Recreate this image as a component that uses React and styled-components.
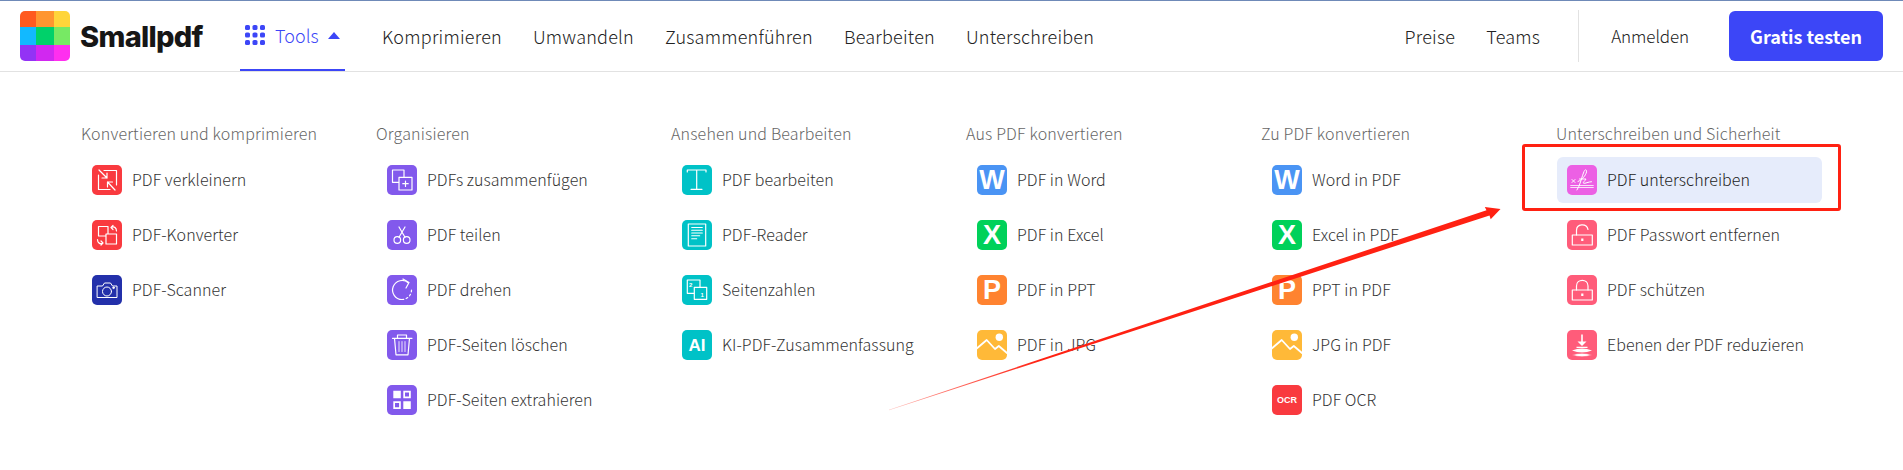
import React from "react";
import styled, { createGlobalStyle } from "styled-components";

const Global = createGlobalStyle`
  html, body { margin: 0; padding: 0; background: #fff; }
  body { font-family: "Noto Sans CJK SC", "Source Sans Pro", "Lato", sans-serif; overflow: hidden; }
`;

const Page = styled.div`position: relative; width: 1903px; height: 470px; background: #fff; overflow: hidden;`;
const Header = styled.header`
  display: flex; align-items: stretch; height: 70px; box-sizing: content-box;
  border-top: 1px solid #6f8ab8; border-bottom: 1px solid #e2e2e2; padding: 0 20px;
`;
const Brand = styled.div`display: flex; align-items: center; gap: 10px; width: 220px;`;
const LogoGrid = styled.div`
  display: grid; grid-template-columns: 16px 18px 16px; grid-template-rows: 16px 18px 16px;
  width: 50px; height: 50px; border-radius: 5px; overflow: hidden;
`;
const LogoCell = styled.span`background: ${p => p.$c};`;
const BrandName = styled.span`
  font-family: Inter, sans-serif; font-weight: 800; font-size: 29px; letter-spacing: -0.7px; color: #161616; line-height: 1;
`;
const ToolsTab = styled.div`
  display: flex; align-items: center; width: 105px; height: 70px; box-sizing: border-box; padding-left: 5px;
  border-bottom: 2px solid #3c46f7; color: #3c46f7; font-size: 18px; font-weight: 300; margin-right: 37px;
`;
const ToolsLabel = styled.span`margin: 0 9px 0 10px; line-height: 24px;`;
const NavList = styled.nav`display: flex; align-items: center; gap: 31px;`;
const NavLink = styled.a`font-size: 18px; font-weight: 300; letter-spacing: 0.22px; line-height: 24px; color: #222;`;
const RightArea = styled.div`margin-left: auto; display: flex; align-items: center;`;
const Divider = styled.div`width: 1px; height: 52px; background: #e2e2e2; margin: 0 32px 0 38px;`;
const LoginLink = styled.a`font-size: 17px; font-weight: 300; letter-spacing: -0.1px; line-height: 24px; color: #222; margin-right: 40px;`;
const CtaButton = styled.button`
  width: 154px; height: 50px; border: 0; border-radius: 6px; background: #3c46f7; color: #fff; padding: 0;
  font: 700 18px/24px "Noto Sans CJK SC", sans-serif;
`;
const Menu = styled.main`display: flex; gap: 30px; padding: 49px 0 0 82px;`;
const Column = styled.section`width: 265px; display: flex; flex-direction: column; gap: 9px;`;
const ColTitle = styled.h3`
  margin: 0 0 3px -1px; font-size: 16px; font-weight: 300; letter-spacing: 0.17px; line-height: 24px; color: #666;
`;
const Row = styled.a`
  position: relative; display: flex; align-items: center; gap: 10px; height: 46px; padding-left: 10px;
  border-radius: 6px; background: ${p => (p.$active ? "#e6ecfb" : "transparent")};
  font-size: 16px; font-weight: 300; letter-spacing: 0.06px; color: ${p => (p.$active ? "#222" : "#333")};
`;
const RowLabel = styled.span`padding-bottom: 3px; line-height: 24px;`;
const Tile = styled.span`
  display: flex; align-items: center; justify-content: center; flex: none; width: 30px; height: 30px;
  border-radius: 5px; overflow: hidden; background: ${p => p.$c}; color: #fff; letter-spacing: 0;
  font-family: "Liberation Sans", Arial, sans-serif; font-weight: 700; font-size: ${p => p.$size || 26}px; line-height: 1;
`;
const RedBox = styled.span`
  position: absolute; left: -35px; top: -13px; right: -19px; bottom: -8px;
  border: 3px solid #ff2112; border-radius: 3px; pointer-events: none;
`;
const ArrowLayer = styled.svg`position: absolute; inset: 0; pointer-events: none;`;

const S = ({ children, w = 1.2, fill = "none" }) => (
  <svg width="30" height="30" viewBox="0 0 30 30" fill={fill} stroke="#fff" strokeWidth={w} strokeLinecap="round" strokeLinejoin="round">{children}</svg>
);
const RED = "#f93a3f", NAVY = "#2330aa", PUR = "#8259ec", TEAL = "#00c2c7", BLUE = "#4a94f4", GRN = "#00d15a", ORG = "#ff8330", YEL = "#ffb938", PINK = "#ff5c7a", MAG = "#ec60e4";

const icons = {
  compress: <S><path d="M12 5.5h12.5V20M18 24.5H6.5V10" /><path d="M7 5l8 8M15 8v5h-5M23 25l-7.5-8M15.5 22v-5h5" /></S>,
  convert: <S><path d="M6.5 6.5h9.5v9.5H6.5z" /><path d="M14 14h10.5v10H14z" fill={RED} /><path d="M19 7.5c3-1.5 5.5 0 5.5 3.5M19 7.5l2-2M19 7.5l2 2M11 23c-3 1.5-5.5 0-5.5-3.5M11 23l-2 2M11 23l-2-2" /></S>,
  camera: <S w={1}><path d="M5.5 11h5l2-3h6l2 3h4.500v11.500h-19.500z" /><circle cx="15" cy="16.500" r="4.500" /><circle cx="21.500" cy="12.800" r="0.800" fill="#fff" /></S>,
  merge: <S><path d="M5.500 5h11.500v12.300H5.500z" /><path d="M12 12.300h13V25H12z" fill={PUR} /><path d="M18.500 16v5.500M15.800 18.700h5.400" /></S>,
  scissors: <S><circle cx="10.300" cy="20" r="3.300" /><circle cx="19.700" cy="20" r="3.300" /><path d="M12 17.200L18 7M18 17.200L12 7" /></S>,
  rotate: <S><path d="M21.500 8a9.500 9.500 0 1 0-6.500 16.500" /><path d="M15 24.500a9.500 9.500 0 0 0 9.500-9.500" strokeDasharray="1.800 2.500" /><path d="M16 4l6 3.500-3 5.500" /></S>,
  trash: <S><path d="M5.500 8.300h19.500M10.500 8V5h9v3M7.500 8.300L9 24.800h12l1.500-16.500" /><path d="M12 11.500v10M15 11.500v10M18 11.500v10" strokeOpacity=".7" /></S>,
  extract: <svg width="30" height="30" viewBox="0 0 30 30"><path fill="#fff" d="M6.300 5.700h7.500v7.600H6.300zM16.300 16.300h7.500v7.700h-7.500z" /><path fill="#fff" fillRule="evenodd" d="M16.300 5.700h7.500v7.600h-7.500zM18 7.400v4.200h4V7.400zM6.300 16.300h7.500v7.700H6.300zM8 18v4.300h4.100V18z" /></svg>,
  text: <S><path d="M5.300 7V5h18.700v2M14.700 5v19.300M9 24.300h11" /></S>,
  reader: <S><path d="M6.300 4h17.400v22H6.300z" /><path d="M9.700 7.500h10.600M9.700 10.300h10.600M9.700 13h10.600M9.700 15.800h8M9.700 18.800h5" strokeWidth="1.100" /></S>,
  pages: <S><path d="M5.300 5H18v13.300H5.300z" /><path d="M12.300 12.300h12.400v12H12.300z" fill={TEAL} /><text x="7" y="11.500" fontSize="6" fill="#fff" stroke="none" fontWeight="700" fontFamily="Liberation Sans">2</text><text x="18.500" y="21.800" fontSize="6" fill="#fff" stroke="none" fontWeight="700" fontFamily="Liberation Sans">1</text></S>,
  image: <S w={1.800}><circle cx="22.300" cy="7.300" r="3.700" fill="#fff" stroke="none" /><path d="M0 18.300l9.700-8.300 8.300 9 3.800-3L30 23" /></S>,
  sign: <S w={1}><path d="M3.700 20.500h22.600M3.700 22.500h22.600" strokeWidth=".8" /><path d="M5 14.500l3 3M8 14.500l-3 3" /><path d="M10 25c3-4 5-14 7-18.500 1-2.500 3-2 2.500 .5-.8 3.500-4.500 8-8.500 9.500M12.500 14h6.500c-1 2-3.500 3.500-2.500 4.200 1.500.6 5-1.500 8-1.500" /></S>,
  unlock: <S><path d="M5.300 15h20v10h-20z" /><path d="M9.500 15v-4.500c0-7 10-7.500 11.500-1" /><path d="M15.300 18.500v2.500" strokeWidth="2.200" strokeLinecap="butt" /></S>,
  lock: <S><path d="M5.300 15h20v10h-20z" /><path d="M9.500 15v-4c0-7.500 11.500-7.500 11.500 0v4" /><path d="M15.300 18.500v2.500" strokeWidth="2.200" strokeLinecap="butt" /></S>,
  flatten: <svg width="30" height="30" viewBox="0 0 30 30"><path d="M15 4.500v10" stroke="#fff" strokeWidth="1.600" /><path d="M10.500 11.500h9L15 16z" fill="#fff" /><path d="M9.500 16.800h11v1.300h-11z" fill="#fff" /><path d="M5 20.500Q15 16.500 25 20.500 15 24.500 5 20.500z" fill="#fff" /><path d="M5 25Q15 21.500 25 25 15 28.500 5 25z" fill="#fff" stroke={PINK} strokeWidth=".6" /></svg>,
};

const columns = [
  { title: "Konvertieren und komprimieren", items: [
    ["PDF verkleinern", RED, icons.compress], ["PDF-Konverter", RED, icons.convert], ["PDF-Scanner", NAVY, icons.camera]] },
  { title: "Organisieren", items: [
    ["PDFs zusammenfügen", PUR, icons.merge], ["PDF teilen", PUR, icons.scissors], ["PDF drehen", PUR, icons.rotate],
    ["PDF-Seiten löschen", PUR, icons.trash], ["PDF-Seiten extrahieren", PUR, icons.extract]] },
  { title: "Ansehen und Bearbeiten", items: [
    ["PDF bearbeiten", TEAL, icons.text], ["PDF-Reader", TEAL, icons.reader], ["Seitenzahlen", TEAL, icons.pages], ["KI-PDF-Zusammenfassung", TEAL, "AI", 17]] },
  { title: "Aus PDF konvertieren", items: [
    ["PDF in Word", BLUE, "W", 27], ["PDF in Excel", GRN, "X", 27], ["PDF in PPT", ORG, "P", 27], ["PDF in JPG", YEL, icons.image]] },
  { title: "Zu PDF konvertieren", items: [
    ["Word in PDF", BLUE, "W", 27], ["Excel in PDF", GRN, "X", 27], ["PPT in PDF", ORG, "P", 27], ["JPG in PDF", YEL, icons.image], ["PDF OCR", RED, "OCR", 9]] },
  { title: "Unterschreiben und Sicherheit", items: [
    ["PDF unterschreiben", MAG, icons.sign, null, true], ["PDF Passwort entfernen", PINK, icons.unlock], ["PDF schützen", PINK, icons.lock], ["Ebenen der PDF reduzieren", PINK, icons.flatten]] },
];

const logoColors = ["#ff5a1f", "#ff9630", "#ffd53a", "#12b9ff", "#00d16a", "#77e964", "#9333f5", "#d128f0", "#ff2fef"];

export default function App() {
  return (
    <Page>
      <Global />
      <Header>
        <Brand>
          <LogoGrid>{logoColors.map(c => <LogoCell key={c} $c={c} />)}</LogoGrid>
          <BrandName>Smallpdf</BrandName>
        </Brand>
        <ToolsTab>
          <svg width="20" height="20" viewBox="0 0 20 20" fill="#3c46f7">
            {[0, 7.500, 15].flatMap(y => [0, 7.500, 15].map(x => <rect key={`${x}-${y}`} x={x} y={y} width="5" height="5" rx="1.600" />))}
          </svg>
          <ToolsLabel>Tools</ToolsLabel>
          <svg width="12" height="7" viewBox="0 0 12 7" fill="#3c46f7"><path d="M6 0l6 7H0z" /></svg>
        </ToolsTab>
        <NavList>
          {["Komprimieren", "Umwandeln", "Zusammenführen", "Bearbeiten", "Unterschreiben"].map(t => <NavLink key={t}>{t}</NavLink>)}
        </NavList>
        <RightArea>
          <NavList><NavLink>Preise</NavLink><NavLink>Teams</NavLink></NavList>
          <Divider />
          <LoginLink>Anmelden</LoginLink>
          <CtaButton>Gratis testen</CtaButton>
        </RightArea>
      </Header>
      <Menu>
        {columns.map(col => (
          <Column key={col.title}>
            <ColTitle>{col.title}</ColTitle>
            {col.items.map(([label, color, icon, size, active]) => (
              <Row key={label} $active={active}>
                <Tile $c={color} $size={size}>{icon}</Tile>
                <RowLabel>{label}</RowLabel>
                {active && <RedBox />}
              </Row>
            ))}
          </Column>
        ))}
      </Menu>
      <ArrowLayer width="1903" height="470" viewBox="0 0 1903 470">
        <defs>
          <linearGradient id="arrowFade" gradientUnits="userSpaceOnUse" x1="889" y1="410" x2="1500" y2="209">
            <stop offset="0" stopColor="#ff2112" stopOpacity="0.25" />
            <stop offset="0.08" stopColor="#ff2112" stopOpacity="0.6" />
            <stop offset="0.25" stopColor="#ff2112" />
            <stop offset="1" stopColor="#ff2112" />
          </linearGradient>
        </defs>
        <path fill="url(#arrowFade)" d="M889 409.800L1486.500 210.200 1484.800 207 1500.500 209 1490.700 219.300 1489.500 215.500 889 410.200z" />
      </ArrowLayer>
    </Page>
  );
}
